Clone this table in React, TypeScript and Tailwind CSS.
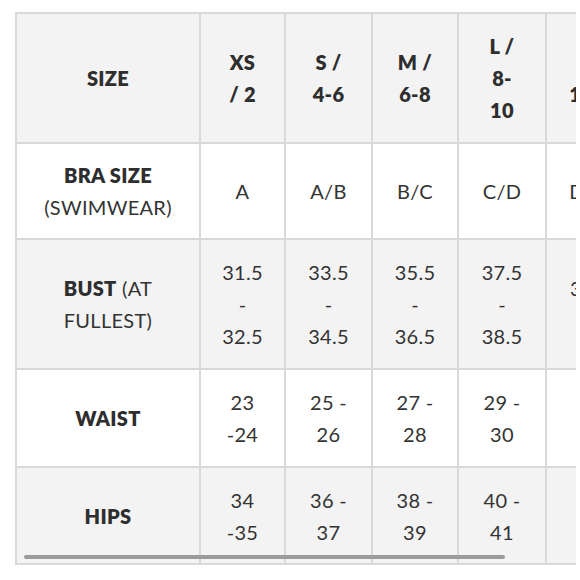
import * as React from "react";

const widths = ["w-[182px]", "w-[83px]", "w-[85px]", "w-[84px]", "w-[86px]", "w-[100px]"];

const B = ({ children }: { children: React.ReactNode }) => (
  <span className="font-extrabold text-[#2e2e2e]">{children}</span>
);

const rows: { height: string; bg: string; cells: React.ReactNode[][] }[] = [
  {
    height: "h-[128px]",
    bg: "bg-[#f3f3f3]",
    cells: [
      [<B key="s">SIZE</B>],
      [<B key="a">XS</B>, <B key="b">/ 2</B>],
      [<B key="a">S /</B>, <B key="b">4-6</B>],
      [<B key="a">M /</B>, <B key="b">6-8</B>],
      [<B key="a">L /</B>, <B key="b">8-</B>, <B key="c">10</B>],
      [<B key="a">XL /</B>, <B key="b">10-12</B>],
    ],
  },
  {
    height: "h-[94px]",
    bg: "bg-white",
    cells: [
      [<B key="a">BRA SIZE</B>, "(SWIMWEAR)"],
      ["A"],
      ["A/B"],
      ["B/C"],
      ["C/D"],
      ["D/DD"],
    ],
  },
  {
    height: "h-[128px]",
    bg: "bg-[#f3f3f3]",
    cells: [
      [
        <span key="a">
          <B>BUST</B> (AT
        </span>,
        "FULLEST)",
      ],
      ["31.5", "-", "32.5"],
      ["33.5", "-", "34.5"],
      ["35.5", "-", "36.5"],
      ["37.5", "-", "38.5"],
      ["39.5 -", "40.5"],
    ],
  },
  {
    height: "h-[96px]",
    bg: "bg-white",
    cells: [
      [<B key="a">WAIST</B>],
      ["23", "-24"],
      ["25 -", "26"],
      ["27 -", "28"],
      ["29 -", "30"],
      ["31 -", "32"],
    ],
  },
  {
    height: "h-[95px]",
    bg: "bg-[#f3f3f3]",
    cells: [
      [<B key="a">HIPS</B>],
      ["34", "-35"],
      ["36 -", "37"],
      ["38 -", "39"],
      ["40 -", "41"],
      ["42 -", "43"],
    ],
  },
];

const App = () => {
  return (
    <div className="w-[580px] h-[580px] bg-white pt-[12px] pl-[15px] font-['Lato',sans-serif] text-[#333333]">
      <div className="relative w-[561px] overflow-hidden">
        <div className="flex flex-col gap-[2px] w-max p-[2px] bg-[#d9d9d9]">
          {rows.map((row, r) => (
            <div key={r} className={`flex gap-[2px] ${row.height}`}>
              {row.cells.map((cell, c) => (
                <div
                  key={c}
                  className={`flex flex-col items-center justify-center text-center text-[20px] leading-[32px] tracking-[0.3px] ${widths[c]} ${row.bg}`}
                >
                  {cell.map((line, i) => (
                    <div key={i} className="whitespace-nowrap">
                      {line}
                    </div>
                  ))}
                </div>
              ))}
            </div>
          ))}
        </div>
        <div className="absolute top-[543px] left-[9px] w-[481px] h-[4px] rounded-full bg-[#9b9b9b]" />
      </div>
    </div>
  );
};

export default App;
